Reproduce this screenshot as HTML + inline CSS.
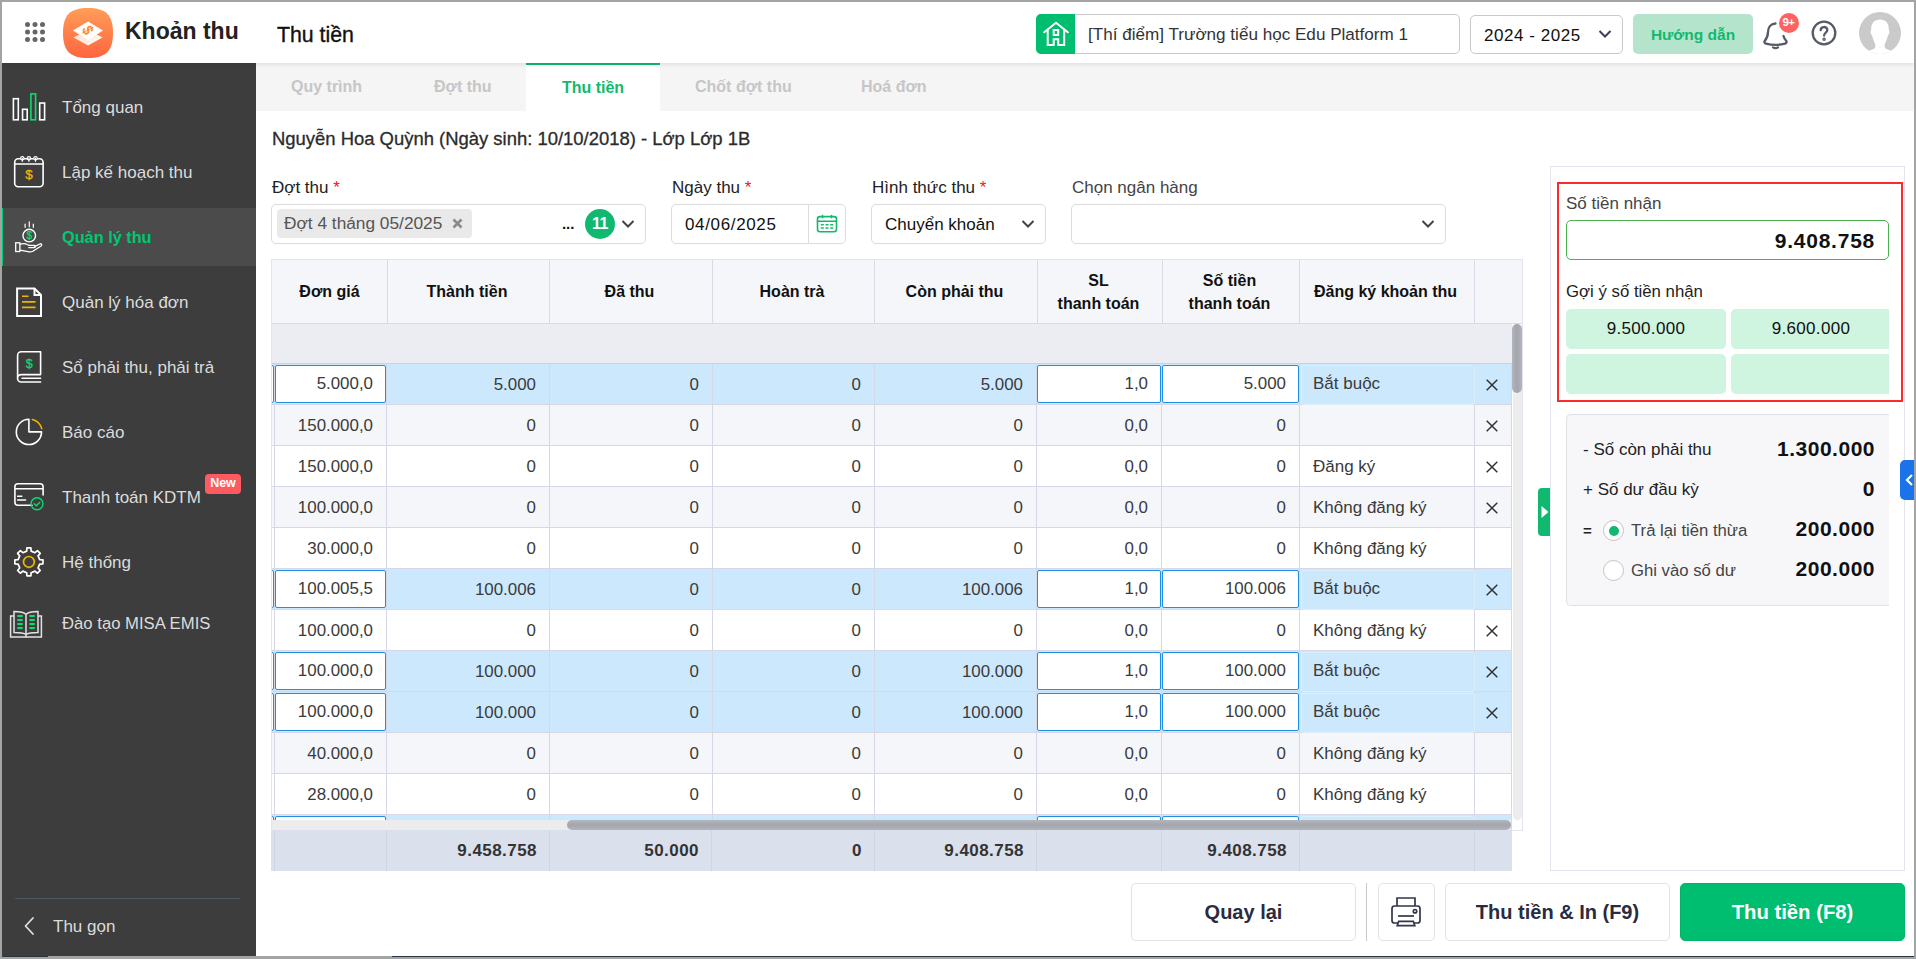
<!DOCTYPE html>
<html lang="vi">
<head>
<meta charset="utf-8">
<title>Thu tiền</title>
<style>
*{box-sizing:border-box;margin:0;padding:0}
html,body{width:1916px;height:959px;overflow:hidden;background:#a4a4a4}
body{font-family:"Liberation Sans",sans-serif;font-size:17px;color:#212121;position:relative}
.abs{position:absolute}
#app{position:absolute;left:2px;top:2px;width:1912px;height:954px;background:#fff;overflow:hidden}
/* header */
#hdr{position:absolute;left:0;top:0;width:1912px;height:61px;background:#fff;box-shadow:0 1px 5px rgba(0,0,0,.11);z-index:5}
/* sidebar */
#side{position:absolute;left:0;top:61px;width:254px;height:893px;background:#3d3d3d;z-index:4}
.mi{position:absolute;left:0;width:254px;height:58px;color:#dcdcdc;font-size:17px}
.mi span{position:absolute;left:60px;top:1px;line-height:58px;white-space:nowrap}
.mi svg{position:absolute}
.mi.on{background:#4b4b4b;border-left:1px solid #00c870}
.mi.on span{color:#00c870;font-weight:700;left:59px;top:0;font-size:16.300px}
/* tabs */
#tabs{position:absolute;left:254px;top:61px;width:1658px;height:48px;background:#f5f5f5}
.tab{position:absolute;top:0;height:48px;line-height:48px;font-size:16px;font-weight:700;color:#c6c6c6;white-space:nowrap}
.tab.on{background:#fff;border-top:2px solid #10b96f;color:#10b96f;line-height:45px;text-align:center}

/* main uses page coordinates */
#main{position:absolute;left:-2px;top:-2px;width:1916px;height:959px}
.lbl{position:absolute;top:176px;line-height:24px;font-size:17px;color:#222;white-space:nowrap}
.lbl i{font-style:normal;color:#f01818}
.inp{position:absolute;top:204px;height:40px;border:1px solid #dcdcdc;border-radius:5px;background:#fff}
.itx{position:absolute;top:205px;line-height:40px;font-size:17px;color:#111;white-space:nowrap}
/* table */
#tb{position:absolute;left:271px;top:259px;width:1252px;height:572px;border:1px solid #e3e4ec;background:#fff;overflow:hidden}
.th{position:absolute;top:0;height:64px;background:#f5f6fa;border-right:1px solid #d9dae6;border-bottom:1px solid #d9dae6;font-weight:700;font-size:16px;color:#111;text-align:center;display:flex;align-items:center;justify-content:center;line-height:23px;padding-right:3px}
.row{position:absolute;left:0;width:1239px;height:41px;border-bottom:1px solid #d6d8e8}
.row.a{background:#f5f6fa}.row.h{background:#cce8fd}
.c{position:absolute;top:0;height:40px;line-height:41px;font-size:16.900px;color:#3a3a3a;text-align:right;padding-right:13px;border-right:1px solid #d6d8e8;white-space:nowrap}
.c.l{text-align:left;padding-left:13px;padding-right:0;font-size:17px}
.c1{left:0;width:3px;padding:0}.c2{left:3px;width:112px}.c3{left:115px;width:163px}.c4{left:278px;width:163px}.c5{left:441px;width:162px}.c6{left:603px;width:162px}.c7{left:765px;width:125px}.c8{left:890px;width:138px}.c9{left:1028px;width:175px}.c10{left:1203px;width:36px;border-right:none;padding:0}
.row.h .c2,.row.h .c7,.row.h .c8,.row.h .c9{line-height:39px}
.row.h .c9::after{content:"";position:absolute;left:1px;top:1px;width:172px;height:38px;border:1px solid #ddeefb;border-radius:2px}
.ib{position:absolute;top:1px;height:38px;background:#fff;border:1px solid #1f8fe6;border-radius:2px}
.x{position:absolute;left:11px;top:15px}
.ft{position:absolute;top:830px;height:41px;background:#dbe0ed;border-right:1px solid #d0d5e4;font-weight:700;font-size:17px;letter-spacing:.45px;color:#333;text-align:right;padding-right:12px;line-height:41px}
/* right panel */
.sg{position:absolute;background:#cff4e0;height:40px;text-align:center;line-height:40px;font-size:17px;letter-spacing:.3px;color:#111}
.sl{position:absolute;left:1583px;line-height:24px;font-size:17px;color:#222;white-space:nowrap}
.sv{position:absolute;right:41px;line-height:28px;font-size:21px;letter-spacing:.5px;font-weight:700;color:#111;white-space:nowrap}
.rd{position:absolute;left:1603px;width:21px;height:21px;border-radius:50%;background:#fff;border:1px solid #c4c4c4}
.btn{position:absolute;top:883px;height:58px;border:1px solid #e2e2e2;border-radius:5px;background:#fff;font-size:20px;font-weight:700;color:#2b2b3f;text-align:center;line-height:56px}
</style>
</head>
<body>
<div id="app">
  <div id="hdr">
    <svg class="abs" style="left:22px;top:19px" width="22" height="22" viewBox="0 0 22 22" fill="#666"><circle cx="3.5" cy="3.5" r="2.5"/><circle cx="11" cy="3.5" r="2.5"/><circle cx="18.5" cy="3.5" r="2.5"/><circle cx="3.5" cy="11" r="2.5"/><circle cx="11" cy="11" r="2.5"/><circle cx="18.5" cy="11" r="2.5"/><circle cx="3.5" cy="18.5" r="2.5"/><circle cx="11" cy="18.5" r="2.5"/><circle cx="18.5" cy="18.5" r="2.5"/></svg>
    <svg class="abs" style="left:61px;top:6px" width="50" height="50" viewBox="0 0 50 50">
      <defs><linearGradient id="lg1" x1="0" y1="0" x2="0" y2="1"><stop offset="0" stop-color="#ff9d57"/><stop offset="1" stop-color="#ff6540"/></linearGradient>
      <linearGradient id="lg2" x1="0" y1="0" x2="1" y2="1"><stop offset="0" stop-color="#ffd9c2"/><stop offset="1" stop-color="#ffffff"/></linearGradient></defs>
      <path d="M25 0C43 0 50 7 50 25S43 50 25 50 0 43 0 25 7 0 25 0Z" fill="url(#lg1)"/>
      <path d="M10.5 29.5 25 22l14.5 7.5L25 37.5Z" fill="url(#lg2)"/>
      <path d="M10 22.5 25 13.5l15 9L25 32Z" fill="#fff"/>
      <text x="0" y="4.600" font-family="Liberation Sans, sans-serif" font-size="13.500" font-weight="700" fill="#ff8a2a" text-anchor="middle" transform="translate(25 22) rotate(62) scale(1 1.150)">$</text>
    </svg>
    <div class="abs" style="left:123px;top:15px;font-size:23px;font-weight:700;line-height:28px;color:#222;white-space:nowrap">Khoản thu</div>
    <div class="abs" style="left:275px;top:19px;font-size:21.3px;line-height:28px;color:#111;white-space:nowrap;-webkit-text-stroke:.35px #111">Thu tiền</div>
    <div class="abs" style="left:1034px;top:12px;width:424px;height:39.500px;border:1px solid #c9c9c9;border-radius:5px;background:#fff"></div>
    <div class="abs" style="left:1034px;top:12px;width:39px;height:39.500px;background:#00be70;border-radius:5px 0 0 5px"></div>
    <svg class="abs" style="left:1038px;top:16px" width="32" height="32" viewBox="1040 18 32 32" fill="none" stroke="#fff" stroke-width="2" stroke-linejoin="miter" stroke-linecap="butt"><path d="M1044.200 32.300 1056 22.700l11.800 9.600" stroke-linecap="round"/><path d="M1047.700 30v15.100h6v-5.900h4.500v5.900h6V30"/><rect x="1053.700" y="30" width="4.500" height="5"/></svg>
    <div class="abs" style="left:1086px;top:13px;line-height:40px;font-size:17.100px;color:#333;white-space:nowrap">[Thí điểm] Trường tiểu học Edu Platform 1</div>
    <div class="abs" style="left:1468px;top:13px;width:153px;height:39px;border:1px solid #c9c9c9;border-radius:5px;background:#fff"></div>
    <div class="abs" style="left:1482px;top:14px;line-height:39px;font-size:17px;color:#111;white-space:nowrap;letter-spacing:.55px">2024 - 2025</div>
    <svg class="abs" style="left:1596px;top:27px" width="14" height="10" viewBox="0 0 14 10" fill="none" stroke="#3b3f5c" stroke-width="2"><path d="M1.5 2 7 7.500 12.500 2"/></svg>
    <div class="abs" style="left:1631px;top:12px;width:120px;height:40px;background:#b5e4cd;border-radius:5px;text-align:center;line-height:42px;font-size:15.500px;font-weight:700;color:#10b96f">Hướng dẫn</div>
    <svg class="abs" style="left:1759px;top:18px" width="30" height="30" viewBox="0 0 30 30" fill="none" stroke="#555b66" stroke-width="2.300" stroke-linecap="round" stroke-linejoin="round"><path d="M14.500 3.500c-5 .3-7.500 4-7.500 8.500 0 4-1.200 6.500-3.300 9 -.8 1 .1 2.300 1.300 2.600 6 1.600 13 1.600 19 0 1.200-.3 2.100-1.600 1.300-2.600-1.300-1.500-2.300-3-2.800-5"/><path d="M12 27.300c1.500 1 3.500 1 5 0" stroke-width="2.200"/></svg>
    <div class="abs" style="left:1776.500px;top:10.500px;width:20px;height:20px;border-radius:10px;background:#ff6262;color:#fff;font-size:11.500px;font-weight:700;text-align:center;line-height:19px;letter-spacing:-.5px">9+</div>
    <svg class="abs" style="left:1809px;top:18px" width="26" height="26" viewBox="0 0 26 26" fill="none" stroke="#555b66" stroke-width="2.300" stroke-linecap="round"><circle cx="13" cy="13" r="11.300"/><path d="M9.700 10.200c0-4.200 6.600-4.200 6.600-.2 0 2.600-3.200 2.600-3.200 5.600"/><circle cx="13.100" cy="19.200" r=".6" fill="#555b66"/></svg>
    <svg class="abs" style="left:1857px;top:10px" width="42" height="42" viewBox="0 0 42 42"><defs><clipPath id="cpa"><circle cx="21" cy="21" r="21"/></clipPath></defs><circle cx="21" cy="21" r="21" fill="#cacaca"/><g clip-path="url(#cpa)" fill="#fff"><path d="M21 7.500c5.500 0 8.800 3.800 8.800 9.500 0 1.500.6 1.800.6 3.200 0 2-1.500 2.800-1.800 4.500-.6 3-2.400 5.600-3 8.500-.3 1.700.3 3.200 2 3.900l5 1.900L32 46H10l-.6-7 5-1.900c1.700-.7 2.300-2.200 2-3.900-.6-2.900-2.400-5.500-3-8.500-.3-1.700-1.800-2.500-1.800-4.500 0-1.400.6-1.700.6-3.200 0-5.700 3.300-9.500 8.800-9.500Z"/></g></svg>
  </div>
  <div id="side">
    <div class="mi" style="top:15px"><span>Tổng quan</span></div>
    <div class="mi" style="top:80px"><span>Lập kế hoạch thu</span></div>
    <div class="mi on" style="top:145px"><span>Quản lý thu</span></div>
    <div class="mi" style="top:210px"><span>Quản lý hóa đơn</span></div>
    <div class="mi" style="top:275px"><span>Sổ phải thu, phải trả</span></div>
    <div class="mi" style="top:340px"><span>Báo cáo</span></div>
    <div class="mi" style="top:405px"><span>Thanh toán KDTM</span></div>
    <div class="abs" style="left:203px;top:411px;width:36px;height:20px;border-radius:4px;background:#ff5a5f;color:#fff;font-size:12.500px;font-weight:700;text-align:center;line-height:19px">New</div>
    <div class="mi" style="top:470px"><span>Hệ thống</span></div>
    <div class="mi" style="top:531px"><span style="font-size:16.700px">Đào tạo MISA EMIS</span></div>
    <svg class="abs" style="left:0;top:0" width="60" height="600" viewBox="2 63 60 600" fill="none" stroke="#fff" stroke-width="1.600" stroke-linecap="round" stroke-linejoin="round">
      <g stroke-linejoin="miter" stroke-linecap="butt">
        <rect x="13.400" y="98.700" width="4.900" height="21.100"/><rect x="22.550" y="109.300" width="4.650" height="10.500"/>
        <rect x="30.900" y="93.900" width="4.700" height="25.900" stroke="#0adc6e"/><rect x="39.700" y="103.050" width="4.900" height="16.750"/>
      </g>
      <rect x="14.700" y="158.800" width="28.400" height="27.900" rx="3.500"/><path d="M14.700 164h28.400"/>
      <g stroke-width="1.200" fill="#3d3d3d"><circle cx="22.300" cy="158.300" r="1.700"/><circle cx="28.900" cy="158.300" r="1.700"/><circle cx="35.500" cy="158.300" r="1.700"/><path d="M22.300 158.300v3M28.900 158.300v3M35.500 158.300v3"/></g>
      <text x="28.900" y="179.200" font-family="Liberation Sans, sans-serif" font-size="13.500" font-weight="400" fill="#f0b400" stroke="#f0b400" stroke-width=".3" text-anchor="middle">$</text>
      <circle cx="29.250" cy="235.600" r="6.300" stroke-width="1.400"/>
      <text x="29.250" y="239.200" font-family="Liberation Sans, sans-serif" font-size="10" font-weight="400" fill="#0adc6e" stroke="#0adc6e" stroke-width=".3" text-anchor="middle">$</text>
      <path d="M25.100 224v3.300M29.250 221.800v5M33.300 224v3.300" stroke-width="1.200"/>
      <rect x="15.700" y="242.800" width="4.200" height="8.700" stroke-width="1.300" stroke-linejoin="miter"/>
      <path d="M20 244.300c2.500-.8 5-.9 7.200.2l1.800.8h5.200c1.600 0 1.600 2.300 0 2.300h-5.400M34.500 246.600l5.300-2.600c1.600-.8 2.700 1 1.300 2l-8.300 5.200c-1.200.7-2.400.8-3.700.6l-9-1.600" stroke-width="1.300"/>
      <g stroke-width="2" stroke-linejoin="miter" stroke-linecap="butt"><path d="M17.100 288.500H34.500L41 295V315.900H17.100Z"/><path d="M34.500 288.500V295H41"/></g>
      <path d="M22 296.250h6.500M22 301.900h13.500M22 307.300h13.500" stroke="#f0b400" stroke-width="1.700" stroke-linecap="butt"/>
      <path d="M40.600 374.600V351.800H21.200a3.600 3.600 0 0 0-3.600 3.600V378.400M40.600 374.600H21.200a3.600 3.600 0 0 0 0 7.400H40.600M22 378.300H40.600"/>
      <text x="29.250" y="368" font-family="Liberation Sans, sans-serif" font-size="12.500" font-weight="400" fill="#0adc6e" stroke="#0adc6e" stroke-width=".3" text-anchor="middle">$</text>
      <path d="M28.900 419.300V431.900H41.500A12.600 12.600 0 1 1 28.900 419.300Z"/>
      <path d="M32.400 419.500A13 13 0 0 1 41.700 428.600" stroke="#f0b400"/>
      <path d="M32 505.200H17.900a3 3 0 0 1-3-3V486.700a3 3 0 0 1 3-3H40.100a3 3 0 0 1 3 3V495M14.900 488.750H43.100"/>
      <path d="M17.600 496.250h4.200M17.600 500h8" stroke-width="1.500"/>
      <circle cx="37" cy="503.750" r="6" stroke="#0adc6e" stroke-width="1.400"/><path d="M34.300 503.700l2 2 3.400-3.300" stroke="#0adc6e" stroke-width="1.400"/>
      <path d="M26.67 551.13 L26.94 547.84 L30.86 547.84 L31.13 551.13 L34.94 552.70 L37.46 550.57 L40.23 553.34 L38.10 555.86 L39.67 559.67 L42.96 559.94 L42.96 563.86 L39.67 564.13 L38.10 567.94 L40.23 570.46 L37.46 573.23 L34.94 571.10 L31.13 572.67 L30.86 575.96 L26.94 575.96 L26.67 572.67 L22.86 571.10 L20.34 573.23 L17.57 570.46 L19.70 567.94 L18.13 564.13 L14.84 563.86 L14.84 559.94 L18.13 559.67 L19.70 555.86 L17.57 553.34 L20.34 550.57 L22.86 552.70Z" stroke-width="1.700"/>
      <circle cx="28.900" cy="561.900" r="5.400" stroke="#f0b400" stroke-width="1.700"/>
      <g stroke="#e2e2e2" stroke-width="1.500" stroke-linejoin="miter"><path d="M13.500 616H10.600V637H41.400V616H38.500"/><path d="M26 634.500V614.500C24 612 19 611.500 14 611.500V632.500C19 632.500 24 633 26 634.500ZM26 634.500C28 633 33 632.500 38 632.500V611.500C33 611.500 28 612 26 614.500M26 634.500V637"/></g>
      <path d="M17.300 616h5.400M17.300 620h5.400M17.300 624h5.400M17.300 628h5.400M29.400 616h5.400M29.400 620h5.400M29.400 624h5.400M29.400 628h5.400" stroke="#0adc6e" stroke-width="1.800" stroke-linecap="butt"/>
    </svg>
    <div class="abs" style="left:13px;top:835px;width:225px;height:1px;background:#4d5666"></div>
    <svg class="abs" style="left:21px;top:853px" width="12" height="20" viewBox="0 0 12 20" fill="none" stroke="#e0e0e0" stroke-width="1.800" stroke-linecap="round" stroke-linejoin="round"><path d="M10 2 2.500 10 10 18"/></svg>
    <div class="abs" style="left:51px;top:850px;line-height:28px;font-size:17px;color:#dcdcdc">Thu gọn</div>
  </div>
  <div id="tabs">
    <div class="tab" style="left:35px">Quy trình</div>
    <div class="tab" style="left:178px">Đợt thu</div>
    <div class="tab on" style="left:270px;width:134px">Thu tiền</div>
    <div class="tab" style="left:439px">Chốt đợt thu</div>
    <div class="tab" style="left:605px">Hoá đơn</div>
  </div>
  <div id="main">
    <div class="abs" style="left:272px;top:126px;line-height:26px;font-size:18.450px;color:#2b2b2b;white-space:nowrap;-webkit-text-stroke:.3px #2b2b2b">Nguyễn Hoa Quỳnh (Ngày sinh: 10/10/2018) - Lớp Lớp 1B</div>
    <div class="lbl" style="left:272px">Đợt thu <i>*</i></div>
    <div class="lbl" style="left:672px">Ngày thu <i>*</i></div>
    <div class="lbl" style="left:872px">Hình thức thu <i>*</i></div>
    <div class="lbl" style="left:1072px;color:#444">Chọn ngân hàng</div>
    <div class="inp" style="left:271px;width:375px"></div>
    <div class="abs" style="left:277px;top:209px;width:195px;height:29px;background:#e9e9e9;border-radius:4px"></div>
    <div class="abs" style="left:284px;top:209px;line-height:29px;font-size:17.300px;color:#555;white-space:nowrap">Đợt 4 tháng 05/2025</div>
    <svg class="abs" style="left:452px;top:218px" width="11" height="11" viewBox="0 0 11 11" stroke="#8a8a8a" stroke-width="2.600" fill="none"><path d="M1.500 1.500l8 8M9.500 1.500l-8 8"/></svg>
    <div class="abs" style="left:562px;top:212px;line-height:24px;font-size:15px;font-weight:700;color:#111;letter-spacing:-.1px">...</div>
    <div class="abs" style="left:585px;top:209px;width:30px;height:30px;border-radius:15px;background:#10b96f;color:#fff;font-weight:700;font-size:16px;text-align:center;line-height:30px;letter-spacing:-.5px">11</div>
    <svg class="abs" style="left:621px;top:219px" width="14" height="10" viewBox="0 0 14 10" fill="none" stroke="#444" stroke-width="2"><path d="M1.500 2 7 7.500 12.500 2"/></svg>
    <div class="inp" style="left:671px;width:175px"></div>
    <div class="abs" style="left:808px;top:205px;width:1px;height:38px;background:#dcdcdc"></div>
    <div class="itx" style="left:685px;letter-spacing:.65px">04/06/2025</div>
    <svg class="abs" style="left:816px;top:213px" width="22" height="21" viewBox="0 0 22 21" fill="none" stroke="#10b96f" stroke-width="1.600" stroke-linecap="round"><rect x="1.500" y="3.600" width="19" height="15.200" rx="2.500"/><path d="M1.500 8.300h19M6.500 2.600v2M15.500 2.600v2"/><path d="M4.800 11.800h3M9.500 11.800h3M14.200 11.800h3M4.800 15h3M9.500 15h3M14.200 15h3" stroke-width="1.400" stroke-linecap="butt"/></svg>
    <div class="inp" style="left:871px;width:175px"></div>
    <div class="itx" style="left:885px">Chuyển khoản</div>
    <svg class="abs" style="left:1021px;top:219px" width="14" height="10" viewBox="0 0 14 10" fill="none" stroke="#444" stroke-width="2"><path d="M1.500 2 7 7.500 12.500 2"/></svg>
    <div class="inp" style="left:1071px;width:375px"></div>
    <svg class="abs" style="left:1421px;top:219px" width="14" height="10" viewBox="0 0 14 10" fill="none" stroke="#444" stroke-width="2"><path d="M1.500 2 7 7.500 12.500 2"/></svg>

    <div id="tb">
      <div class="th" style="left:0;width:3px"></div>
      <div class="th" style="left:3px;width:113px">Đơn giá</div>
      <div class="th" style="left:116px;width:162px">Thành tiền</div>
      <div class="th" style="left:278px;width:163px">Đã thu</div>
      <div class="th" style="left:441px;width:162px">Hoàn trà</div>
      <div class="th" style="left:603px;width:163px">Còn phải thu</div>
      <div class="th" style="left:766px;width:125px">SL<br>thanh toán</div>
      <div class="th" style="left:891px;width:137px">Số tiền<br>thanh toán</div>
      <div class="th" style="left:1028px;width:175px">Đăng ký khoản thu</div>
      <div class="th" style="left:1203px;width:49px;border-right:none"></div>
      <div class="abs" style="left:0;top:64px;width:1240px;height:40px;z-index:1;background:#ecedf2;border-bottom:1px solid #d0d1d8"></div>
      <div class="abs" style="left:-3px;top:72px;line-height:22px;font-size:17px;color:#1e88e5">u</div>
      <div class="row h" style="top:104px"><div class="c c1"><div class="ib" style="left:-10px;width:12px"></div></div><div class="c c2"><div class="ib" style="left:0;width:111px"></div><span style="position:relative">5.000,0</span></div><div class="c c3">5.000</div><div class="c c4">0</div><div class="c c5">0</div><div class="c c6">5.000</div><div class="c c7"><div class="ib" style="left:0;width:124px"></div><span style="position:relative">1,0</span></div><div class="c c8"><div class="ib" style="left:0;width:137px"></div><span style="position:relative">5.000</span></div><div class="c c9 l">Bắt buộc</div><div class="c c10"><svg class="x" width="12" height="12" viewBox="0 0 12 12" stroke="#333" stroke-width="1.500" fill="none"><path d="M.7.7l10.600 10.600M11.300.7.700 11.300"/></svg></div></div>
      <div class="row a" style="top:145px"><div class="c c1"></div><div class="c c2">150.000,0</div><div class="c c3">0</div><div class="c c4">0</div><div class="c c5">0</div><div class="c c6">0</div><div class="c c7">0,0</div><div class="c c8">0</div><div class="c c9 l"></div><div class="c c10"><svg class="x" width="12" height="12" viewBox="0 0 12 12" stroke="#333" stroke-width="1.500" fill="none"><path d="M.7.7l10.600 10.600M11.300.7.700 11.300"/></svg></div></div>
      <div class="row " style="top:186px"><div class="c c1"></div><div class="c c2">150.000,0</div><div class="c c3">0</div><div class="c c4">0</div><div class="c c5">0</div><div class="c c6">0</div><div class="c c7">0,0</div><div class="c c8">0</div><div class="c c9 l">Đăng ký</div><div class="c c10"><svg class="x" width="12" height="12" viewBox="0 0 12 12" stroke="#333" stroke-width="1.500" fill="none"><path d="M.7.7l10.600 10.600M11.300.7.700 11.300"/></svg></div></div>
      <div class="row a" style="top:227px"><div class="c c1"></div><div class="c c2">100.000,0</div><div class="c c3">0</div><div class="c c4">0</div><div class="c c5">0</div><div class="c c6">0</div><div class="c c7">0,0</div><div class="c c8">0</div><div class="c c9 l">Không đăng ký</div><div class="c c10"><svg class="x" width="12" height="12" viewBox="0 0 12 12" stroke="#333" stroke-width="1.500" fill="none"><path d="M.7.7l10.600 10.600M11.300.7.700 11.300"/></svg></div></div>
      <div class="row " style="top:268px"><div class="c c1"></div><div class="c c2">30.000,0</div><div class="c c3">0</div><div class="c c4">0</div><div class="c c5">0</div><div class="c c6">0</div><div class="c c7">0,0</div><div class="c c8">0</div><div class="c c9 l">Không đăng ký</div><div class="c c10"></div></div>
      <div class="row h" style="top:309px"><div class="c c1"><div class="ib" style="left:-10px;width:12px"></div></div><div class="c c2"><div class="ib" style="left:0;width:111px"></div><span style="position:relative">100.005,5</span></div><div class="c c3">100.006</div><div class="c c4">0</div><div class="c c5">0</div><div class="c c6">100.006</div><div class="c c7"><div class="ib" style="left:0;width:124px"></div><span style="position:relative">1,0</span></div><div class="c c8"><div class="ib" style="left:0;width:137px"></div><span style="position:relative">100.006</span></div><div class="c c9 l">Bắt buộc</div><div class="c c10"><svg class="x" width="12" height="12" viewBox="0 0 12 12" stroke="#333" stroke-width="1.500" fill="none"><path d="M.7.7l10.600 10.600M11.300.7.700 11.300"/></svg></div></div>
      <div class="row " style="top:350px"><div class="c c1"></div><div class="c c2">100.000,0</div><div class="c c3">0</div><div class="c c4">0</div><div class="c c5">0</div><div class="c c6">0</div><div class="c c7">0,0</div><div class="c c8">0</div><div class="c c9 l">Không đăng ký</div><div class="c c10"><svg class="x" width="12" height="12" viewBox="0 0 12 12" stroke="#333" stroke-width="1.500" fill="none"><path d="M.7.7l10.600 10.600M11.300.7.700 11.300"/></svg></div></div>
      <div class="row h" style="top:391px"><div class="c c1"><div class="ib" style="left:-10px;width:12px"></div></div><div class="c c2"><div class="ib" style="left:0;width:111px"></div><span style="position:relative">100.000,0</span></div><div class="c c3">100.000</div><div class="c c4">0</div><div class="c c5">0</div><div class="c c6">100.000</div><div class="c c7"><div class="ib" style="left:0;width:124px"></div><span style="position:relative">1,0</span></div><div class="c c8"><div class="ib" style="left:0;width:137px"></div><span style="position:relative">100.000</span></div><div class="c c9 l">Bắt buộc</div><div class="c c10"><svg class="x" width="12" height="12" viewBox="0 0 12 12" stroke="#333" stroke-width="1.500" fill="none"><path d="M.7.7l10.600 10.600M11.300.7.700 11.300"/></svg></div></div>
      <div class="row h" style="top:432px"><div class="c c1"><div class="ib" style="left:-10px;width:12px"></div></div><div class="c c2"><div class="ib" style="left:0;width:111px"></div><span style="position:relative">100.000,0</span></div><div class="c c3">100.000</div><div class="c c4">0</div><div class="c c5">0</div><div class="c c6">100.000</div><div class="c c7"><div class="ib" style="left:0;width:124px"></div><span style="position:relative">1,0</span></div><div class="c c8"><div class="ib" style="left:0;width:137px"></div><span style="position:relative">100.000</span></div><div class="c c9 l">Bắt buộc</div><div class="c c10"><svg class="x" width="12" height="12" viewBox="0 0 12 12" stroke="#333" stroke-width="1.500" fill="none"><path d="M.7.7l10.600 10.600M11.300.7.700 11.300"/></svg></div></div>
      <div class="row a" style="top:473px"><div class="c c1"></div><div class="c c2">40.000,0</div><div class="c c3">0</div><div class="c c4">0</div><div class="c c5">0</div><div class="c c6">0</div><div class="c c7">0,0</div><div class="c c8">0</div><div class="c c9 l">Không đăng ký</div><div class="c c10"></div></div>
      <div class="row " style="top:514px"><div class="c c1"></div><div class="c c2">28.000,0</div><div class="c c3">0</div><div class="c c4">0</div><div class="c c5">0</div><div class="c c6">0</div><div class="c c7">0,0</div><div class="c c8">0</div><div class="c c9 l">Không đăng ký</div><div class="c c10"></div></div>
      <div class="row h" style="top:555px"><div class="c c1"><div class="ib" style="left:-10px;width:12px"></div></div><div class="c c2"><div class="ib" style="left:0;width:111px"></div><span style="position:relative"></span></div><div class="c c3"></div><div class="c c4"></div><div class="c c5"></div><div class="c c6"></div><div class="c c7"><div class="ib" style="left:0;width:124px"></div><span style="position:relative"></span></div><div class="c c8"><div class="ib" style="left:0;width:137px"></div><span style="position:relative"></span></div><div class="c c9 l"></div><div class="c c10"></div></div>
      
      <div class="abs" style="left:1239px;top:64px;width:13px;height:507px;background:#fff;border-left:1px solid #d6d8e8"></div><div class="abs" style="left:1240.500px;top:64px;width:9.500px;height:496px;border-radius:5px;background:#ededed"></div>
      <div class="abs" style="left:1240px;top:64px;width:10px;height:69px;border-radius:5px;background:linear-gradient(90deg,#b4b6bd,#a6a8af 40%,#a6a8af 60%,#b4b6bd)"></div>
      <div class="abs" style="left:0;top:560px;width:1239px;height:11px;background:#ececec"></div>
      <div class="abs" style="left:295px;top:560px;width:944px;height:10px;border-radius:5px;background:linear-gradient(#b4b6bd,#a6a8af 40%,#a6a8af 60%,#b4b6bd)"></div>
    </div>
    <div class="ft" style="left:271px;width:4px;padding:0"></div>
    <div class="ft" style="left:275px;width:112px"></div>
    <div class="ft" style="left:387px;width:163px">9.458.758</div>
    <div class="ft" style="left:550px;width:162px">50.000</div>
    <div class="ft" style="left:712px;width:163px">0</div>
    <div class="ft" style="left:875px;width:162px">9.408.758</div>
    <div class="ft" style="left:1037px;width:125px"></div>
    <div class="ft" style="left:1162px;width:138px">9.408.758</div>
    <div class="ft" style="left:1300px;width:175px"></div>
    <div class="ft" style="left:1475px;width:37px;border-right:none"></div>

    <div class="abs" style="left:1550px;top:166px;width:355px;height:705px;border:1px solid #e4e4ef;background:#fff"></div>
    <div class="abs" style="left:1557px;top:182px;width:346px;height:220px;border:2px solid #fc2a2c"></div>
    <div class="abs" style="left:1566px;top:192px;line-height:24px;font-size:17px;color:#444;white-space:nowrap">Số tiền nhận</div>
    <div class="abs" style="left:1566px;top:220px;width:323px;height:40px;border:1px solid #4caf50;border-radius:5px;background:#fff"></div>
    <div class="abs" style="left:1566px;top:220px;width:309px;text-align:right;line-height:41px;font-size:21px;font-weight:700;letter-spacing:.75px;color:#111">9.408.758</div>
    <div class="abs" style="left:1566px;top:280px;line-height:24px;font-size:16.800px;color:#222;white-space:nowrap">Gợi ý số tiền nhận</div>
    <div class="sg" style="left:1566px;top:309px;width:160px;border-radius:5px">9.500.000</div>
    <div class="sg" style="left:1731px;top:309px;width:158px;border-radius:5px 0 0 5px;padding-left:2px">9.600.000</div>
    <div class="sg" style="left:1566px;top:354px;width:160px;border-radius:5px"></div>
    <div class="sg" style="left:1731px;top:354px;width:158px;border-radius:5px 0 0 5px"></div>
    <div class="abs" style="left:1566px;top:414px;width:323px;height:192px;background:#f7f7fa;border:1px solid #e0e0e7;border-right:none;border-radius:5px 0 0 5px"></div>
    <div class="sl" style="top:438px">- Số còn phải thu</div><div class="sv" style="top:435px">1.300.000</div>
    <div class="sl" style="top:478px">+ Số dư đầu kỳ</div><div class="sv" style="top:475px">0</div>
    <div class="sl" style="top:519px;font-weight:700;font-size:15px">=</div>
    <div class="rd" style="top:520px"></div><div class="abs" style="left:1608.500px;top:525.500px;width:10px;height:10px;border-radius:5px;background:#10b96f"></div>
    <div class="sl" style="top:519px;left:1631px;color:#444;font-size:16.700px">Trả lại tiền thừa</div><div class="sv" style="top:515px">200.000</div>
    <div class="rd" style="top:560px"></div>
    <div class="sl" style="top:559px;left:1631px;color:#444;font-size:16.700px">Ghi vào số dư</div><div class="sv" style="top:555px">200.000</div>
    <div class="abs" style="left:1538px;top:488px;width:12px;height:48px;background:#10b96f;border-radius:4px 0 0 4px"></div>
    <svg class="abs" style="left:1541px;top:505px" width="8" height="14" viewBox="0 0 8 14"><path d="M.5 1 7.500 7 .5 13Z" fill="#fff"/></svg>
    <div class="abs" style="left:1900px;top:460px;width:14px;height:40px;background:#1a73e8;border-radius:5px 0 0 5px"></div>
    <svg class="abs" style="left:1904px;top:473px" width="10" height="14" viewBox="0 0 10 14" fill="none" stroke="#fff" stroke-width="2.200"><path d="M8 2 3 7l5 5"/></svg>

    <div class="btn" style="left:1131px;width:225px">Quay lại</div>
    <div class="abs" style="left:1366px;top:883px;width:1px;height:58px;background:#c9c9c9"></div>
    <div class="btn" style="left:1378px;width:57px"></div>
    <svg class="abs" style="left:1388px;top:894px" width="36" height="36" viewBox="1388 894 36 36" fill="none" stroke="#33364a" stroke-width="1.700" stroke-linejoin="miter"><path d="M1397 906V898h18v8"/><rect x="1392" y="906" width="28" height="17" rx="2.500" fill="#fff"/><path d="M1398.700 921.300h14.600l1.500 4.300h-17.600Z" fill="#fff"/><path d="M1398 916h16"/><circle cx="1415" cy="911.200" r="1.700"/></svg>
    <div class="btn" style="left:1445px;width:225px">Thu tiền &amp; In (F9)</div>
    <div class="btn" style="left:1680px;width:225px;background:#00be70;border-color:#00b666;color:#fff;font-size:20.300px">Thu tiền (F8)</div>
  </div>
</div>
<div class="abs" style="left:392px;top:956px;width:1522px;height:1px;background:#263644"></div>
<div class="abs" style="left:2px;top:956px;width:46px;height:1px;background:#263644"></div>
</body>
</html>
